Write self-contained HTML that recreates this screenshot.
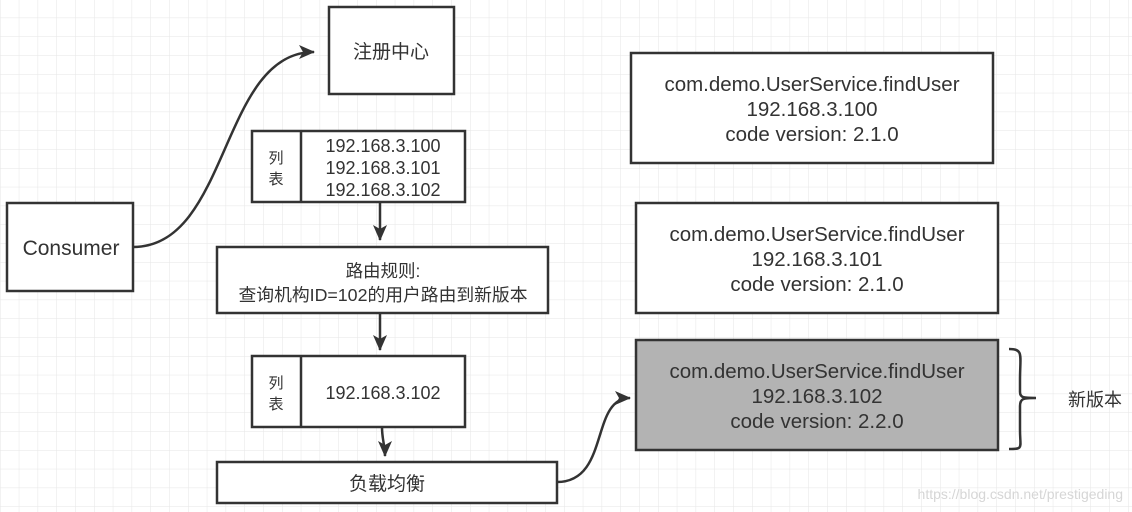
<!DOCTYPE html>
<html><head><meta charset="utf-8"><style>
html,body{margin:0;padding:0;background:#fff;}
svg{display:block;}
text{font-family:"Liberation Sans","Noto Sans CJK SC",sans-serif;fill:#333;}
</style></head><body>
<svg width="1132" height="512" viewBox="0 0 1132 512" xmlns="http://www.w3.org/2000/svg">
<defs>
<pattern id="g" x="0" y="-1.2" width="18.8" height="18.8" patternUnits="userSpaceOnUse">
<path d="M0 0H18.8M0 0V18.8" stroke="#e6e6e6" stroke-width="1" fill="none"/>
</pattern>
<marker id="a2" markerWidth="16" markerHeight="14" refX="15" refY="7" orient="auto" markerUnits="userSpaceOnUse" viewBox="0 0 16 14">
<path d="M0 0L16 7L0 14L4 7Z" fill="#333"/>
</marker>
</defs>
<rect width="1132" height="512" fill="url(#g)"/>
<g stroke="#333" stroke-width="2.5" fill="none">
<path d="M133 247 C230 247 220 52 314 52" marker-end="url(#a2)"/>
<path d="M380 202 V240" marker-end="url(#a2)"/>
<path d="M380 313 V350" marker-end="url(#a2)"/>
<path d="M382 427 C382 440 385 445 385 456" marker-end="url(#a2)"/>
<path d="M557 482 C610 482 590 398 630 398" marker-end="url(#a2)"/>
<path d="M1009 349 C1024 349 1020 355 1020 380 L1020 392 C1020 398 1024 398 1036 398 C1024 398 1020 398 1020 406 L1020 430 C1020 448 1024 449 1009 449"/>
</g>
<g stroke="#333" stroke-width="2.5" fill="#fff">
<rect x="329" y="7" width="125" height="87"/>
<rect x="7" y="203" width="126" height="88"/>
<rect x="252" y="131" width="213" height="71"/>
<line x1="301" y1="131" x2="301" y2="202"/>
<rect x="217" y="247" width="331" height="66"/>
<rect x="252" y="356" width="213" height="71"/>
<line x1="301" y1="356" x2="301" y2="427"/>
<rect x="217" y="462" width="340" height="41"/>
<rect x="631" y="53" width="362" height="110"/>
<rect x="636" y="203" width="362" height="110"/>
<rect x="636" y="340" width="362" height="110" fill="#b3b3b3"/>
</g>
<g font-size="20.5" text-anchor="middle">
<text x="391" y="58" font-size="19">注册中心</text>
<text x="71" y="255" font-size="21">Consumer</text>
<g font-size="15"><text x="276" y="163">列</text><text x="276" y="184">表</text>
<text x="276" y="388">列</text><text x="276" y="409">表</text></g>
<g font-size="18"><text x="383" y="152">192.168.3.100</text><text x="383" y="174">192.168.3.101</text><text x="383" y="196">192.168.3.102</text>
<text x="383" y="399">192.168.3.102</text>
<text x="383" y="277" font-size="17.5">路由规则:</text><text x="383" y="301" font-size="17.8">查询机构ID=102的用户路由到新版本</text>
<text x="387" y="490" font-size="19">负载均衡</text></g>
<text x="812" y="91">com.demo.UserService.findUser</text><text x="812" y="116">192.168.3.100</text><text x="812" y="141">code version: 2.1.0</text>
<text x="817" y="241">com.demo.UserService.findUser</text><text x="817" y="266">192.168.3.101</text><text x="817" y="291">code version: 2.1.0</text>
<text x="817" y="378">com.demo.UserService.findUser</text><text x="817" y="403">192.168.3.102</text><text x="817" y="428">code version: 2.2.0</text>
<text x="1095" y="406" font-size="18">新版本</text>
</g>
<text x="1123" y="499" font-size="14" text-anchor="end" style="fill:#d6d6d6">https://blog.csdn.net/prestigeding</text>
</svg>
</body></html>
